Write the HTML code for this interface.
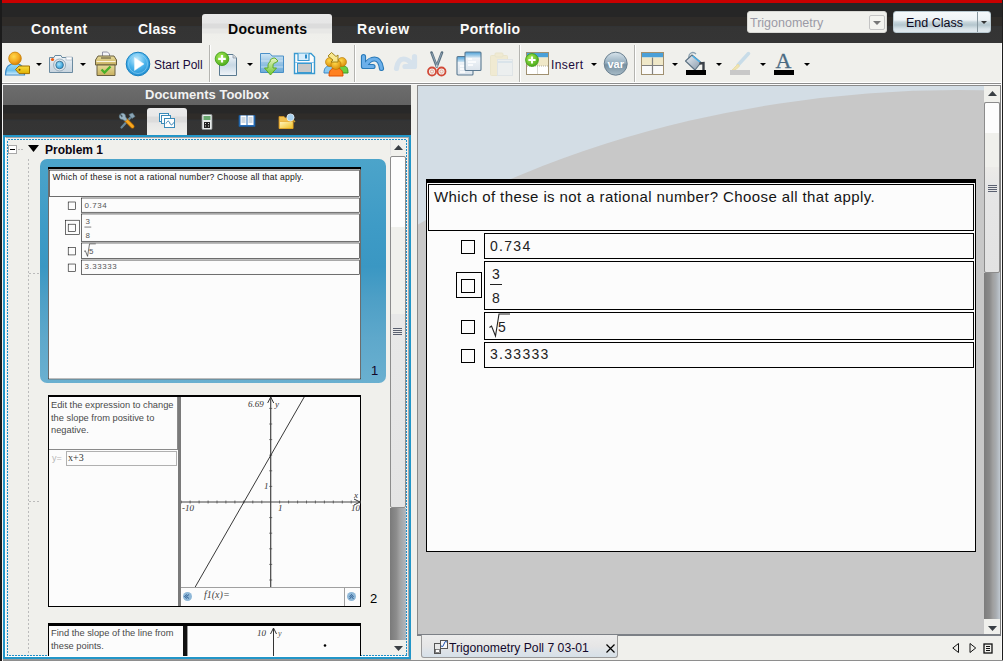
<!DOCTYPE html>
<html><head><meta charset="utf-8">
<style>
*{margin:0;padding:0;box-sizing:border-box}
html,body{width:1003px;height:661px;overflow:hidden;background:#262626;font-family:"Liberation Sans",sans-serif}
.a{position:absolute}
#red{left:2px;top:0;width:1001px;height:3px;background:#c80000}
#lbar{left:0;top:0;width:2px;height:661px;background:#1b1b1b}
#tabs{left:2px;top:17px;width:1001px;height:26px;background:linear-gradient(#2f2c29 0,#2f2c29 9px,#2e3236 9px,#343434 10px,#353535 26px)}
.tl{font-weight:bold;font-size:14px;color:#fafafa;top:21px;letter-spacing:0.55px}
#dtab{left:202px;top:14px;width:130px;height:29px;border-radius:3px 3px 0 0;background:linear-gradient(#e9e9e9 0,#e6e6e6 9px,#dcdcdc 10px,#dcdcdc 14px,#e8e8e6 15px,#e8e8e6 19px,#efefeb 20px,#f0f0ec 29px)}
#tbar{left:2px;top:43px;width:1001px;height:42px;background:#f0f0ec}
#tbar .bl{left:0;top:39px;width:1001px;height:1px;background:#fff}
#tbar .bd{left:0;top:40px;width:1001px;height:1px;background:#8c8c8c}
#tbar .bw{left:0;top:41px;width:1001px;height:1px;background:#fafafa}
.sep{top:2px;width:1px;height:37px;background:#b4b4b0}
.sep:after{content:"";position:absolute;left:1px;top:0;width:1px;height:37px;background:#fff}
.dd{width:0;height:0;border-left:3px solid transparent;border-right:3px solid transparent;border-top:3px solid #000}
.tt{font-size:12px;color:#1a0a3a;top:15px}
/* left panel */
#lp{left:3px;top:85px;width:408px;height:576px;background:#f0f0ec}
#lph{left:0;top:0;width:408px;height:20px;background:linear-gradient(#6f7276 0,#6c6c6c 1px,#636363 20px);color:#f2f2f2;font-weight:bold;font-size:13px;text-align:center;line-height:20px}
#lpt{left:0;top:20px;width:408px;height:30px;background:linear-gradient(#282828 0,#282828 8px,#2f2c29 9px,#2f2c29 14px,#2e3236 15px,#343434 16px,#353535 30px)}
#atab{left:144px;top:23px;width:40px;height:27px;border-radius:3px 3px 0 0;background:linear-gradient(#ececec 0,#e8e8e8 8px,#dcdcdc 9px,#dcdcdc 14px,#e6e6e6 15px,#f0f0ec 27px)}
#lpb{left:0;top:50px;width:408px;height:525px;background:#2296c8;border-bottom:1px solid #999}
#lpi{left:2px;top:52px;width:404px;height:520px;background:#f0f0ec;border:1px solid #fff;border-top-color:#a8a8a8;border-right-color:#a8a8a8}
#dash{left:4px;top:54px;width:400px;height:517px;border:1px dashed #2a97cc}
/* right panel */
#rp{left:417px;top:85px;width:586px;height:551px;background:#c8c8c8;border-top:1px solid #8a8a8a;border-left:1px solid #8a8a8a;overflow:hidden}
#bot{left:417px;top:636px;width:586px;height:25px;background:#f0f0ec}
.page{background:#fcfcfc;border:1px solid #000;border-top:4px solid #000}
.qb{border:1px solid #000;background:#fcfcfc}
.cb{border:1px solid #000;background:#fcfcfc}
.tx{font-size:15px;color:#111}
.pg{position:absolute;width:550px;height:373px}
.qb{border:1px solid #000;background:#fcfcfc}
.cb{width:14px;height:14px;border:1px solid #000;background:#fcfcfc}
.qt{font-size:15px;color:#151515;letter-spacing:0.4px;white-space:nowrap}
.at{font-size:14px;color:#222;letter-spacing:1.3px;white-space:nowrap}
.tht{color:#555;letter-spacing:1px}
</style></head><body>
<div class="a" id="lbar"></div>
<div class="a" id="red"></div>
<div class="a" id="tabs"></div>
<div class="a" id="dtab"></div>
<div class="a tl" style="left:31px">Content</div>
<div class="a tl" style="left:138px;letter-spacing:0.2px">Class</div>
<div class="a tl" style="left:228px;color:#050505;letter-spacing:0.35px">Documents</div>
<div class="a tl" style="left:357px;letter-spacing:0.8px">Review</div>
<div class="a tl" style="left:460px;letter-spacing:0.3px">Portfolio</div>

<!-- selector -->
<div class="a" style="left:747px;top:11px;width:140px;height:22px;border-radius:3px;background:#f0f0ec;border:1px solid #d8d8d4"></div>
<div class="a" style="left:750px;top:16px;font-size:12.5px;color:#9b9aa6">Trigonometry</div>
<div class="a" style="left:869px;top:15px;width:16px;height:15px;border:1px solid #c4c4c4;border-radius:2px;background:#f4f4f0"></div>
<div class="a dd" style="left:874px;top:21px;border-width:4px 4px 0 4px;border-top-color:#777;margin-left:-1px"></div>
<div class="a" style="left:893px;top:11px;width:98px;height:22px;border-radius:3px;border:1px solid #b8c8d0;background:linear-gradient(#f6f9fb 0,#eef3f6 8px,#c8d6dc 10px,#b4c6ce 13px,#c8d6dc 15px,#dae4ea 17px,#e2eaee 21px)"></div>
<div class="a" style="left:977px;top:12px;width:1px;height:20px;background:#8898a0"></div>
<div class="a" style="left:906px;top:16px;font-size:12.5px;color:#0c0820">End Class</div>
<div class="a dd" style="left:981px;top:21px;border-top-color:#333"></div>

<div class="a" id="tbar">
  <div class="a bl"></div><div class="a bd"></div><div class="a bw"></div>
  <div class="a sep" style="left:207px"></div>
  <div class="a sep" style="left:352px"></div>
  <div class="a sep" style="left:517px"></div>
  <div class="a sep" style="left:632px"></div>
  <div class="a tt" style="left:152px">Start Poll</div>
  <div class="a tt" style="left:549px;letter-spacing:0.4px">Insert</div>
  <div class="a dd" style="left:34px;top:20px"></div>
  <div class="a dd" style="left:78px;top:20px"></div>
  <div class="a dd" style="left:245px;top:20px"></div>
  <div class="a dd" style="left:589px;top:20px"></div>
  <div class="a dd" style="left:670px;top:20px"></div>
  <div class="a dd" style="left:714px;top:20px"></div>
  <div class="a dd" style="left:758px;top:20px"></div>
  <div class="a dd" style="left:802px;top:20px"></div>
  <!-- ICONS -->
</div>

<!-- TOOLBAR ICONS -->
<svg class="a" style="left:4px;top:50px" width="27" height="28">
<defs>
<radialGradient id="gHead" cx="0.4" cy="0.35" r="0.7"><stop offset="0" stop-color="#ffd84a"/><stop offset="0.6" stop-color="#f3a820"/><stop offset="1" stop-color="#d07a08"/></radialGradient>
<linearGradient id="gBody" x1="0" y1="0" x2="0" y2="1"><stop offset="0" stop-color="#9fdcf8"/><stop offset="0.6" stop-color="#6cc0ec"/><stop offset="1" stop-color="#d8f0fc"/></linearGradient>
<linearGradient id="gTag" x1="0" y1="0" x2="0" y2="1"><stop offset="0" stop-color="#f8dc40"/><stop offset="1" stop-color="#e0b000"/></linearGradient>
</defs>
<path d="M1.5 25C1.5 17 5 13.5 11 13.5S20.5 17 20.5 25Z" fill="url(#gBody)" stroke="#3a8ac8" stroke-width="1.2"/>
<circle cx="11" cy="8.4" r="6.3" fill="url(#gHead)" stroke="#c88000" stroke-width="0.8"/>
<path d="M11.5 19.5L15 16H25.5V23.6H15Z" fill="url(#gTag)" stroke="#a07000" stroke-width="1"/>
<circle cx="15.5" cy="19.8" r="1" fill="#805000"/>
</svg>
<svg class="a" style="left:48px;top:54px" width="26" height="20">
<defs><linearGradient id="gCam" x1="0" y1="0" x2="0" y2="1"><stop offset="0" stop-color="#f4f8fa"/><stop offset="0.5" stop-color="#d8e2ea"/><stop offset="1" stop-color="#c8d4de"/></linearGradient>
<radialGradient id="gLens" cx="0.4" cy="0.4" r="0.6"><stop offset="0" stop-color="#a8e4fc"/><stop offset="1" stop-color="#2a9ad8"/></radialGradient></defs>
<path d="M1.5 3.5H6L7 1.5H13L14 3.5H24.5V18.5H1.5Z" fill="url(#gCam)" stroke="#6a8aa0" stroke-width="1"/>
<rect x="18" y="3" width="6" height="3" fill="#fff" stroke="#9ab" stroke-width="0.6"/>
<circle cx="11.6" cy="11" r="6" fill="#dde6ec" stroke="#8aa0b0" stroke-width="0.8"/>
<circle cx="11.6" cy="11" r="3.8" fill="url(#gLens)" stroke="#3a6a88" stroke-width="0.8"/>
<circle cx="4.5" cy="5.5" r="1.6" fill="#f05a10"/>
</svg>
<svg class="a" style="left:94px;top:51px" width="24" height="26">
<defs><linearGradient id="gBox" x1="0" y1="0" x2="0" y2="1"><stop offset="0" stop-color="#e8dc9a"/><stop offset="1" stop-color="#c8b060"/></linearGradient></defs>
<path d="M8.5 1H13.5L15.5 3V8H8.5Z" fill="#f4f4f8" stroke="#7a7a90" stroke-width="0.8"/>
<path d="M4 5H20L22.5 9V14H1.5V9Z" fill="url(#gBox)" stroke="#6a6040" stroke-width="1"/>
<path d="M7 7H17" stroke="#6a6040" stroke-width="1.2"/>
<path d="M2.5 10.5H21.5" stroke="#f8f4e0" stroke-width="1"/>
<path d="M3 14H21V24.5H3Z" fill="url(#gBox)" stroke="#6a6040" stroke-width="1"/>
<path d="M7.5 18.5L10.5 21.5L16.5 15.5" fill="none" stroke="#48b028" stroke-width="2.4"/>
</svg>
<svg class="a" style="left:125px;top:51px" width="26" height="26">
<defs><radialGradient id="gPlay" cx="0.45" cy="0.3" r="0.75"><stop offset="0" stop-color="#c8ecfc"/><stop offset="0.5" stop-color="#4cb4ec"/><stop offset="1" stop-color="#1a88cc"/></radialGradient></defs>
<circle cx="13" cy="13" r="11.8" fill="url(#gPlay)" stroke="#1880c0" stroke-width="1"/>
<circle cx="13" cy="13" r="9.5" fill="none" stroke="#9ad8f8" stroke-width="0.8" opacity="0.7"/>
<path d="M9.5 6.5L19 13L9.5 19.5Z" fill="#fff" stroke="#e8f4fc" stroke-width="0.5"/>
</svg>
<svg class="a" style="left:213px;top:51px" width="26" height="26">
<defs><linearGradient id="gDoc" x1="0" y1="0" x2="0" y2="1"><stop offset="0" stop-color="#f4f8fc"/><stop offset="0.5" stop-color="#c8d8e4"/><stop offset="1" stop-color="#f0f4f8"/></linearGradient>
<radialGradient id="gPlus" cx="0.4" cy="0.35" r="0.7"><stop offset="0" stop-color="#a8ec58"/><stop offset="1" stop-color="#48a818"/></radialGradient></defs>
<path d="M6.5 3.5H20L23.5 7V24.5H6.5Z" fill="url(#gDoc)" stroke="#5a7a90" stroke-width="1"/>
<path d="M20 3.5V7H23.5" fill="#d8d8d8" stroke="#8a9aa8" stroke-width="0.8"/>
<circle cx="9" cy="7.8" r="6.8" fill="url(#gPlus)" stroke="#3a9a10" stroke-width="0.8"/>
<path d="M9 4V11.6M5.2 7.8H12.8" stroke="#fff" stroke-width="2.2"/>
</svg>
<svg class="a" style="left:259px;top:52px" width="26" height="24">
<defs><linearGradient id="gFold" x1="0" y1="0" x2="0" y2="1"><stop offset="0" stop-color="#d0e6f4"/><stop offset="0.5" stop-color="#98c4e4"/><stop offset="1" stop-color="#6aaad8"/></linearGradient>
<linearGradient id="gArr" x1="0" y1="0" x2="0" y2="1"><stop offset="0" stop-color="#e8f4c8"/><stop offset="1" stop-color="#70c830"/></linearGradient></defs>
<path d="M1.5 1.5H11L13 4H24.5V20.5H1.5Z" fill="url(#gFold)" stroke="#4a90c8" stroke-width="1"/>
<path d="M2 9H24M2 15H24" stroke="#e8f4fc" stroke-width="0.8" opacity="0.8"/>
<path d="M11 10C11 7 13 6 16 6L19 9L16 11C14.5 11 14 12 14 14V16H17.5L11.5 23L5.5 16H9V14C9 12 10 10 11 10Z" fill="url(#gArr)" stroke="#58a818" stroke-width="0.9"/>
</svg>
<svg class="a" style="left:293px;top:52px" width="23" height="23">
<path d="M1.5 1.5H18L21.5 5V21.5H1.5Z" fill="#fcfcfc" stroke="#3a9ad0" stroke-width="1.4"/>
<path d="M5 1.5V8.5H16V1.5" fill="#d8eefc" stroke="#3a9ad0" stroke-width="1.2"/>
<rect x="12" y="2.5" width="2" height="4" fill="#2a8ac8"/>
<rect x="4.5" y="11.5" width="14" height="9" fill="#c8c8c8" stroke="#3a9ad0" stroke-width="1"/>
<path d="M2 10.5H21" stroke="#8ac4ec" stroke-width="1"/>
</svg>
<svg class="a" style="left:323px;top:51px" width="26" height="26">
<defs><radialGradient id="gH2" cx="0.4" cy="0.35" r="0.7"><stop offset="0" stop-color="#ffd84a"/><stop offset="1" stop-color="#d88a08"/></radialGradient></defs>
<path d="M1 22C1 17 3 15 7 15S12 17 12 22Z" fill="#8ccaf0" stroke="#3a88c8"/>
<path d="M14 22C14 17 16 15 20 15S25 17 25 22Z" fill="#6cd040" stroke="#3a9a20"/>
<circle cx="7" cy="11" r="4.5" fill="url(#gH2)" stroke="#b87a00" stroke-width="0.6"/>
<circle cx="19" cy="11" r="4.5" fill="url(#gH2)" stroke="#b87a00" stroke-width="0.6"/>
<path d="M6 25C6 19 8.5 17 13 17S20 19 20 25Z" fill="#ff8020" stroke="#e05000"/>
<circle cx="13" cy="13.5" r="5" fill="url(#gH2)" stroke="#b87a00" stroke-width="0.6"/>
<path d="M5 5L8.5 1.5L13 5.5L15 4V11H8L10 9Z" fill="#f8e890" stroke="#9a7a10" stroke-width="0.9"/>
</svg>
<svg class="a" style="left:360px;top:53px" width="26" height="20">
<path d="M6 11.5C9 7 12 6 14.5 6C18 6 20.5 9 21.5 15.5" fill="none" stroke="#2a7ab8" stroke-width="5.2" stroke-linecap="round"/>
<path d="M3.5 3.5V13.5H13" fill="none" stroke="#2a7ab8" stroke-width="5.2" stroke-linecap="round" stroke-linejoin="round"/>
<path d="M6 11.5C9 7 12 6 14.5 6C18 6 20.5 9 21.5 15.5" fill="none" stroke="#6cb0ea" stroke-width="3" stroke-linecap="round"/>
<path d="M3.5 3.5V13.5H13" fill="none" stroke="#6cb0ea" stroke-width="3" stroke-linecap="round" stroke-linejoin="round"/>
<path d="M5 12L11 6" stroke="#6cb0ea" stroke-width="3"/>
</svg>
<svg class="a" style="left:392px;top:53px" width="26" height="20">
<path d="M20 11.5C17 7 14 6 11.5 6C8 6 5.5 9 4.5 15.5" fill="none" stroke="#d6e2ec" stroke-width="5.2" stroke-linecap="round"/>
<path d="M22.5 3.5V13.5H13" fill="none" stroke="#d6e2ec" stroke-width="5.2" stroke-linecap="round" stroke-linejoin="round"/>
</svg>
<svg class="a" style="left:426px;top:51px" width="22" height="26">
<path d="M5.5 1.5L10.8 15.5M16 1.5L10.7 15.5" stroke="#5a7080" stroke-width="2.6" stroke-linecap="round"/>
<path d="M6 2.5L10.5 14M15.5 2.5L11 14" stroke="#9ab0c0" stroke-width="0.8" stroke-linecap="round"/>
<circle cx="10.75" cy="15" r="1" fill="#c8d4dc"/>
<circle cx="6" cy="20.5" r="4" fill="none" stroke="#d24a38" stroke-width="1.8"/>
<circle cx="15.5" cy="20.5" r="4" fill="none" stroke="#d24a38" stroke-width="1.8"/>
<circle cx="6" cy="20.5" r="1.6" fill="none" stroke="#e8a090" stroke-width="0.9"/>
<circle cx="15.5" cy="20.5" r="1.6" fill="none" stroke="#e8a090" stroke-width="0.9"/>
</svg>
<svg class="a" style="left:456px;top:51px" width="26" height="25">
<defs><linearGradient id="gPg" x1="0" y1="0" x2="0" y2="1"><stop offset="0" stop-color="#4aa0d8"/><stop offset="0.28" stop-color="#c8e0f0"/><stop offset="0.32" stop-color="#f0f4f8"/><stop offset="1" stop-color="#dce4ec"/></linearGradient></defs>
<rect x="1" y="5.5" width="16" height="18.5" rx="1" fill="url(#gPg)" stroke="#5a7890" stroke-width="1.1"/>
<path d="M4 15H9M4 18H10M4 21H9" stroke="#fff" stroke-width="1.4"/>
<rect x="9" y="1" width="16" height="18.5" rx="1" fill="url(#gPg)" stroke="#5a7890" stroke-width="1.1"/>
<path d="M12 8H16M12 11H20M12 14H17" stroke="#fff" stroke-width="1.4"/>
</svg>
<svg class="a" style="left:489px;top:52px" width="25" height="25" opacity="0.42">
<rect x="1.5" y="3.5" width="17" height="20" rx="1" fill="#f0e4b0" stroke="#e0d4a0"/>
<rect x="6" y="1" width="8" height="4" rx="1" fill="#f0e4b0" stroke="#e0d4a0"/>
<rect x="8.5" y="7.5" width="15" height="16" fill="#e8eef4" stroke="#c8d4e0"/>
<path d="M9 10H23" stroke="#bcd4e8" stroke-width="2"/>
</svg>
<svg class="a" style="left:525px;top:51px" width="25" height="25">
<defs><radialGradient id="gPl2" cx="0.4" cy="0.35" r="0.7"><stop offset="0" stop-color="#a8ec58"/><stop offset="1" stop-color="#48a818"/></radialGradient></defs>
<rect x="1.5" y="1.5" width="22" height="22" fill="#fff" stroke="#a09070" stroke-width="1"/>
<rect x="2" y="2" width="21" height="4.5" fill="#4aa0d8"/>
<rect x="2" y="6.5" width="21" height="8.5" fill="#f0e8c8"/>
<path d="M2 15H23M12.5 6.5V23" stroke="#a0a090" stroke-width="0.8" stroke-dasharray="1 1"/>
<circle cx="7" cy="9" r="6.4" fill="url(#gPl2)" stroke="#3a9a10" stroke-width="0.8"/>
<path d="M7 5.4V12.6M3.4 9H10.6" stroke="#fff" stroke-width="2"/>
</svg>
<svg class="a" style="left:603px;top:51px" width="26" height="26">
<defs><linearGradient id="gVar" x1="0" y1="0" x2="0" y2="1"><stop offset="0" stop-color="#d8e4ec"/><stop offset="0.45" stop-color="#98b0c0"/><stop offset="0.55" stop-color="#7890a0"/><stop offset="1" stop-color="#a8bcc8"/></linearGradient></defs>
<circle cx="12.7" cy="12.7" r="11.5" fill="url(#gVar)" stroke="#6a8090" stroke-width="1"/>
<text x="12.7" y="16.5" text-anchor="middle" font-family="Liberation Sans" font-weight="bold" font-size="11" fill="#fff">var</text>
</svg>
<svg class="a" style="left:640px;top:51px" width="25" height="25">
<rect x="1.5" y="1.5" width="22" height="22" fill="#fafafa" stroke="#a09070" stroke-width="1"/>
<rect x="2" y="2" width="21" height="4.5" fill="#4aa0d8"/>
<rect x="2" y="6.5" width="21" height="8" fill="#f0e8c8"/>
<path d="M2 14.5H23M12.5 6.5V23" stroke="#808080" stroke-width="1.2"/>
</svg>
<svg class="a" style="left:684px;top:51px" width="24" height="25">
<defs><linearGradient id="gBk" x1="0" y1="0" x2="1" y2="1"><stop offset="0" stop-color="#eef2f6"/><stop offset="0.5" stop-color="#b8c4d0"/><stop offset="1" stop-color="#8898a8"/></linearGradient></defs>
<path d="M5 7C4 2 9 0 12 3" fill="none" stroke="#8aa0b0" stroke-width="1.3"/>
<path d="M1.5 10L8 4L17 11.5L11 19Z" fill="url(#gBk)" stroke="#5a7080" stroke-width="1.1" stroke-linejoin="round"/>
<path d="M8.5 5L16 11" stroke="#4ab0e8" stroke-width="1.6"/>
<path d="M15.5 12.5L19.5 12V19" stroke="#3a4048" stroke-width="2.4" fill="none"/>
<rect x="2" y="19" width="20" height="5" fill="#000"/>
</svg>
<svg class="a" style="left:729px;top:51px" width="22" height="25">
<path d="M19.5 2.5L9 14" stroke="#c8dce8" stroke-width="3.5" stroke-linecap="round"/>
<path d="M9 13L4.5 17.5L3 19L7 18.5L10.5 15Z" fill="#f0e4b0" stroke="#e8dca8"/>
<rect x="1" y="19" width="20" height="5" fill="#c8c8c8"/>
</svg>
<svg class="a" style="left:773px;top:51px" width="22" height="25">
<text x="10.5" y="17" text-anchor="middle" font-family="Liberation Serif" font-size="22" fill="#4a6a82" stroke="#4a6a82" stroke-width="0.3">A</text>
<rect x="1" y="19" width="20" height="5" fill="#000"/>
</svg>
<!-- LEFT PANEL -->
<div class="a" style="left:3px;top:85px;width:1000px;height:576px;background:#f0f0ec"></div>
<div class="a" id="lp">
  <div class="a" id="lph">Documents Toolbox</div>
  <div class="a" id="lpt"></div>
  <div class="a" id="atab"></div>
  <div class="a" id="lpb"></div>
  <div class="a" id="lpi"></div>
  
</div>


<!-- left panel tab icons -->
<svg class="a" style="left:118px;top:112px" width="18" height="18">
<path d="M13 5L3.5 15.5" stroke="#6a8a9c" stroke-width="2.2" stroke-linecap="round"/>
<path d="M11 2.5L14.5 1L17 4.5L14 6.5Z" fill="#8aa4b4" stroke="#5a7a8c" stroke-width="0.6"/>
<path d="M8 8L14.5 14.5" stroke="#b86a00" stroke-width="4" stroke-linecap="round"/>
<path d="M8 8L14.5 14.5" stroke="#f8a820" stroke-width="2.6" stroke-linecap="round"/>
<path d="M2 2.5C0.5 4.5 1.5 7.5 4.5 7.5L7.5 9L9 7.5L7.5 4.5C7.5 1.5 4.5 0.5 2.5 2L4.5 4L3.8 5.2Z" fill="#9ab4c4" stroke="#5a7a8c" stroke-width="0.6"/>
</svg>
<svg class="a" style="left:159px;top:113px" width="17" height="16">
<rect x="0.5" y="0.5" width="9" height="8" fill="#fcfdfd" stroke="#3a8ab8" stroke-width="1"/>
<rect x="2.5" y="2.5" width="9" height="8" fill="#fcfdfd" stroke="#3a8ab8" stroke-width="1"/>
<rect x="5.5" y="5.5" width="10" height="9" fill="#fcfdfd" stroke="#3a8ab8" stroke-width="1"/>
<path d="M7 10.5C8.5 7.5 10 7.5 10.8 10S13.5 12.5 14.5 9.5" stroke="#2a7ab0" stroke-width="1" fill="none"/>
</svg>
<svg class="a" style="left:201px;top:114px" width="12" height="16">
<rect x="1" y="0.5" width="10" height="15" rx="1" fill="#e8ecec" stroke="#8a9090" stroke-width="0.8"/>
<rect x="2.5" y="2" width="7" height="4" fill="#6aa870"/>
<rect x="3" y="8" width="6" height="6" fill="#222"/>
<path d="M4 9.5H5M7 9.5H8M4 12H5M7 12H8" stroke="#ddd" stroke-width="1"/>
</svg>
<svg class="a" style="left:238px;top:114px" width="18" height="15">
<path d="M1 1.5H8.5L9 2.5L9.5 1.5H17V12.5H1Z" fill="#2a6eb8" stroke="#1a5a9a" stroke-width="0.8"/>
<rect x="2.5" y="1.5" width="6" height="9.5" fill="#fff"/>
<rect x="9.5" y="1.5" width="6" height="9.5" fill="#fff"/>
<path d="M3.5 4H7.5M3.5 6H7.5M3.5 8H7.5M10.5 4H14.5M10.5 6H14.5M10.5 8H14.5" stroke="#9ab" stroke-width="0.9"/>
</svg>
<svg class="a" style="left:278px;top:113px" width="18" height="17">
<defs><linearGradient id="gYf" x1="0" y1="0" x2="1" y2="1"><stop offset="0" stop-color="#fff4c0"/><stop offset="1" stop-color="#f0c020"/></linearGradient></defs>
<path d="M1 3.5H6L7.5 5H15V15.5H1Z" fill="#f0c050" stroke="#d09020" stroke-width="0.8"/>
<path d="M1.5 8.5H15V15.5H1.5Z" fill="url(#gYf)" stroke="#e0a020" stroke-width="0.6"/>
<circle cx="12.5" cy="4.5" r="3.6" fill="#a8d0ec" stroke="#e8f4fc" stroke-width="0.8"/>
<path d="M15 7L17 9" stroke="#d0a030" stroke-width="1.4"/>
</svg>

<div class="a" style="left:2px;top:85px;width:1px;height:576px;background:#f4f4f4"></div>
<svg class="a" style="left:7px;top:139px" width="400" height="517"><rect x="0.5" y="0.5" width="399" height="516" fill="none" stroke="#1f8fc8" stroke-width="1" stroke-dasharray="2 1" shape-rendering="crispEdges"/></svg>
<div class="a" style="left:8px;top:145px;width:9px;height:9px;border:1px solid #a8a8a8;background:#fff"></div>
<div class="a" style="left:10px;top:149px;width:5px;height:1px;background:#000"></div>
<svg class="a" style="left:18px;top:149px" width="6" height="1"><path d="M0 .5H5" stroke="#bbb" stroke-dasharray="2 1"/></svg>
<svg class="a" style="left:28px;top:159px" width="1" height="496"><path d="M.5 0V496" stroke="#bbb" stroke-dasharray="2 2"/></svg>
<svg class="a" style="left:28px;top:145px" width="11" height="7"><path d="M0 0H11L5.5 7Z" fill="#000"/></svg>
<div class="a" style="left:45px;top:143px;font-size:12px;font-weight:bold;color:#0a0510">Problem 1</div>
<!-- thumb 1 -->
<div class="a" style="left:40px;top:159px;width:346px;height:224px;border-radius:7px;background:linear-gradient(#4ca4ca 0%,#3e9bc6 30%,#3a97c3 48%,#4d9fc6 62%,#5ea8cb 80%,#6ab0d0 100%)"></div>
<div class="a" style="left:48px;top:167px;width:550px;height:373px;transform:scale(0.5691);transform-origin:0 0">
<div class="pg">
  <div class="a" style="left:0;top:0;width:550px;height:373px;background:#fcfcfc;border:1px solid #000;border-top:4px solid #000"></div>
  <div class="a qb" style="left:2px;top:5px;width:546px;height:47px"></div>
  <div class="a qt" style="left:8px;top:9px">Which of these is not a rational number? Choose all that apply.</div>
  <div class="a qb" style="left:58px;top:54px;width:490px;height:26px"></div>
  <div class="a qb" style="left:58px;top:82px;width:490px;height:49px"></div>
  <div class="a qb" style="left:58px;top:133px;width:490px;height:28px"></div>
  <div class="a qb" style="left:58px;top:163px;width:490px;height:26px"></div>
  <div class="a cb" style="left:35px;top:61px"></div>
  <div class="a" style="left:30px;top:93px;width:26px;height:26px;border:1px solid #000"></div>
  <div class="a cb" style="left:35px;top:100px"></div>
  <div class="a cb" style="left:35px;top:141px"></div>
  <div class="a cb" style="left:35px;top:170px"></div>
  <div class="a at tht" style="left:64px;top:59px">0.734</div>
  <div class="a at tht" style="left:66px;top:87px">3</div>
  <div class="a" style="left:64px;top:105px;width:12px;height:1px;background:#222"></div>
  <div class="a at tht" style="left:66px;top:111px">8</div>
  <svg class="a" style="left:62px;top:134px" width="24" height="25"><path d="M1.5 14.5 L3.5 13 L7.5 23 L11 1 L22 1" fill="none" stroke="#222" stroke-width="1.1"/></svg>
  <div class="a at tht" style="left:72px;top:140px">5</div>
  <div class="a at tht" style="left:64px;top:167px">3.33333</div>
</div></div>
<div class="a" style="left:371px;top:363px;font-size:13px;color:#12082a">1</div>
<svg class="a" style="left:29px;top:273px" width="11" height="1"><path d="M0 .5H11" stroke="#bbb" stroke-dasharray="2 2"/></svg>
<svg class="a" style="left:29px;top:501px" width="12" height="1"><path d="M0 .5H12" stroke="#bbb" stroke-dasharray="2 2"/></svg>
<!-- thumb 2 -->
<div class="a" style="left:48px;top:395px;width:313px;height:212px;background:#fcfcfc;border:1px solid #000;border-top:2px solid #000"></div>
<div class="a" style="left:49px;top:397px;width:129px;height:53px;border:1px solid #8a8a8a;border-top:none;border-left:none"></div>
<div class="a" style="left:51px;top:399px;font-size:9.3px;line-height:12.6px;color:#4a4a4a;width:126px">Edit the expression to change the slope from positive to negative.</div>
<div class="a" style="left:52px;top:453px;font-size:9px;color:#b8b8b8">y=</div>
<div class="a" style="left:66px;top:451px;width:111px;height:15px;border:1px solid #b0b0b0;background:#fcfcfc"></div>
<div class="a" style="left:68px;top:452px;font-size:10px;font-family:'Liberation Serif';color:#333">x+3</div>
<div class="a" style="left:178px;top:397px;width:3px;height:209px;background:#7a7a7a"></div>
<svg class="a" style="left:181px;top:397px" width="180" height="190">
<path d="M0.2 103.5v3 M9.1 103.5v3 M18.1 103.5v3 M27.1 103.5v3 M36.0 103.5v3 M44.9 103.5v3 M53.9 103.5v3 M62.8 103.5v3 M71.8 103.5v3 M80.8 103.5v3 M98.6 103.5v3 M107.6 103.5v3 M116.6 103.5v3 M125.5 103.5v3 M134.4 103.5v3 M143.4 103.5v3 M152.3 103.5v3 M161.3 103.5v3 M170.2 103.5v3 M179.2 103.5v3 M88.2 183.0h3 M88.2 167.4h3 M88.2 151.8h3 M88.2 136.2h3 M88.2 120.6h3 M88.2 89.4h3 M88.2 73.8h3 M88.2 58.2h3 M88.2 42.6h3 M88.2 27.0h3 M88.2 11.4h3" stroke="#555" stroke-width="0.8" fill="none"/>
<path d="M89.7 0V190 M0 105H179" stroke="#444" stroke-width="1.2" fill="none"/>
<path d="M86.7 6L89.7 0L92.7 6 M173 102L179 105L173 108" stroke="#333" stroke-width="1" fill="none"/>
<path d="M14.2 190L123.2 0" stroke="#222" stroke-width="0.9" fill="none"/>
<text x="67" y="10" font-size="9" font-style="italic" fill="#333" font-family="Liberation Serif">6.69</text>
<text x="94" y="10" font-size="9" font-style="italic" fill="#333" font-family="Liberation Serif">y</text>
<text x="83" y="92" font-size="9" font-style="italic" fill="#333" font-family="Liberation Serif">1</text>
<text x="173" y="101" font-size="9" font-style="italic" fill="#333" font-family="Liberation Serif">x</text>
<text x="1" y="114" font-size="9" font-style="italic" fill="#333" font-family="Liberation Serif">-10</text>
<text x="97" y="114" font-size="9" font-style="italic" fill="#333" font-family="Liberation Serif">1</text>
<text x="170" y="114" font-size="9" font-style="italic" fill="#333" font-family="Liberation Serif">10</text>
</svg>
<div class="a" style="left:181px;top:587px;width:179px;height:19px;border-top:1px solid #a0a0a0;background:#fcfcfc"></div>
<div class="a" style="left:344px;top:588px;width:1px;height:18px;background:#a0a0a0"></div>
<svg class="a" style="left:182px;top:591px" width="12" height="12"><circle cx="5.5" cy="5.5" r="4.5" fill="#8fb8d8"/><path d="M7 3.5L4.5 5.5L7 7.5 M5 3.5L2.5 5.5L5 7.5" stroke="#2a5a90" fill="none" stroke-width="0.9"/></svg>
<svg class="a" style="left:346px;top:591px" width="12" height="12"><circle cx="5.5" cy="5.5" r="4.5" fill="#8fb8d8"/><path d="M3.5 6L5.5 3.5L7.5 6 M3.5 8L5.5 5.5L7.5 8" stroke="#2a5a90" fill="none" stroke-width="0.9"/></svg>
<div class="a" style="left:204px;top:589px;font-size:10px;font-style:italic;font-family:'Liberation Serif';color:#444">f1(x)=</div>
<div class="a" style="left:370px;top:591px;font-size:13px;color:#000">2</div>
<!-- thumb 3 -->
<div class="a" style="left:48px;top:623px;width:313px;height:33px;background:#fcfcfc;border:1px solid #000;border-top:3px solid #000;border-bottom:none"></div>
<div class="a" style="left:183px;top:626px;width:4px;height:30px;background:#111"></div>
<div class="a" style="left:187px;top:626px;width:1px;height:30px;background:#999"></div>
<div class="a" style="left:51px;top:627px;font-size:9.3px;line-height:12.6px;color:#4a4a4a;width:130px">Find the slope of the line from these points.</div>
<svg class="a" style="left:188px;top:626px" width="172" height="30"><path d="M85.5 2V32 M82.5 8L85.5 2L88.5 8" stroke="#333" stroke-width="1" fill="none"/><circle cx="137" cy="19.5" r="1.3" fill="#000"/>
<text x="69" y="10" font-size="9" font-style="italic" fill="#333" font-family="Liberation Serif">10</text><text x="90" y="10" font-size="8" font-style="italic" fill="#555" font-family="Liberation Serif">y</text></svg>
<!-- left scrollbar -->
<div class="a" style="left:390px;top:140px;width:16px;height:15px;background:#f0f0ec;border-left:1px solid #e4e4e4"></div>
<svg class="a" style="left:394px;top:145px" width="9" height="5"><path d="M0 5L4.5 0L9 5Z" fill="#3a3f44"/></svg>
<div class="a" style="left:390px;top:156px;width:16px;height:352px;border:1px solid #8c8c8c;border-radius:2px;background:linear-gradient(#fdfdfd 0,#fdfdfd 20%,#f0f0ec 20%,#f0f0ec 45%,#e8e8e8 45%,#e4e4e4 100%)"></div>
<svg class="a" style="left:393px;top:328px" width="9" height="8"><path d="M0 .5H9M0 2.5H9M0 4.5H9M0 6.5H9" stroke="#5a6070" stroke-width="1"/></svg>
<div class="a" style="left:390px;top:508px;width:16px;height:132px;background:linear-gradient(90deg,#7a7a7a 0,#8c8c8c 40%,#a0a0a0 60%,#b0b8c0 100%)"></div>
<div class="a" style="left:390px;top:640px;width:16px;height:15px;background:#f0f0ec"></div>
<svg class="a" style="left:394px;top:646px" width="9" height="5"><path d="M0 0L4.5 5L9 0Z" fill="#3a3f44"/></svg>

<!-- RIGHT PANEL -->
<div class="a" id="rp">
  <svg class="a" style="left:0;top:0" width="586" height="551"><rect x="0" y="0" width="586" height="551" fill="#d3dde5"/><ellipse cx="540" cy="715" rx="923" ry="711" fill="#c8c8c8"/></svg>
</div>
<div class="a" id="bot"></div>
<div class="a" style="left:426px;top:179px;width:550px;height:373px">
<div class="pg">
  <div class="a" style="left:0;top:0;width:550px;height:373px;background:#fcfcfc;border:1px solid #000;border-top:4px solid #000"></div>
  <div class="a qb" style="left:2px;top:5px;width:546px;height:47px"></div>
  <div class="a qt" style="left:8px;top:9px">Which of these is not a rational number? Choose all that apply.</div>
  <div class="a qb" style="left:58px;top:54px;width:490px;height:26px"></div>
  <div class="a qb" style="left:58px;top:82px;width:490px;height:49px"></div>
  <div class="a qb" style="left:58px;top:133px;width:490px;height:28px"></div>
  <div class="a qb" style="left:58px;top:163px;width:490px;height:26px"></div>
  <div class="a cb" style="left:35px;top:61px"></div>
  <div class="a" style="left:30px;top:93px;width:26px;height:26px;border:1px solid #000"></div>
  <div class="a cb" style="left:35px;top:100px"></div>
  <div class="a cb" style="left:35px;top:141px"></div>
  <div class="a cb" style="left:35px;top:170px"></div>
  <div class="a at" style="left:64px;top:59px">0.734</div>
  <div class="a at" style="left:66px;top:87px">3</div>
  <div class="a" style="left:64px;top:105px;width:12px;height:1px;background:#222"></div>
  <div class="a at" style="left:66px;top:111px">8</div>
  <svg class="a" style="left:62px;top:134px" width="24" height="25"><path d="M1.5 14.5 L3.5 13 L7.5 23 L11 1 L22 1" fill="none" stroke="#222" stroke-width="1.1"/></svg>
  <div class="a at" style="left:72px;top:140px">5</div>
  <div class="a at" style="left:64px;top:167px">3.33333</div>
</div></div>


<!-- right scrollbar -->
<div class="a" style="left:1000px;top:85px;width:1px;height:551px;background:#808080"></div>
<div class="a" style="left:1001px;top:43px;width:1px;height:618px;background:#fafafa"></div>
<div class="a" style="left:1002px;top:0;width:1px;height:661px;background:#1e1e1e"></div>
<div class="a" style="left:984px;top:86px;width:16px;height:16px;background:#f0f0ec"></div>
<svg class="a" style="left:988px;top:91px" width="9" height="5"><path d="M0 5L4.5 0L9 5Z" fill="#3a3f44"/></svg>
<div class="a" style="left:984px;top:102px;width:16px;height:171px;border:1px solid #8c8c8c;border-radius:2px;background:linear-gradient(#fdfdfd 0,#fdfdfd 18%,#f0f0ec 18%,#f0f0ec 38%,#ecebe8 38%,#e6e6e6 50%,#e2e2e2 100%)"></div>
<svg class="a" style="left:988px;top:185px" width="9" height="8"><path d="M0 .5H9M0 2.5H9M0 4.5H9M0 6.5H9" stroke="#5a6070" stroke-width="1"/></svg>
<div class="a" style="left:984px;top:273px;width:16px;height:346px;background:linear-gradient(90deg,#7c7c7c 0,#8a8a8a 35%,#a0a0a0 55%,#a8acb0 75%,#c0c8d0 100%)"></div>
<div class="a" style="left:984px;top:619px;width:16px;height:16px;background:#f0f0ec"></div>
<svg class="a" style="left:988px;top:626px" width="9" height="5"><path d="M0 0L4.5 5L9 0Z" fill="#3a3f44"/></svg>
<!-- bottom strip -->
<div class="a" style="left:417px;top:634px;width:584px;height:2px;background:#7c8086"></div>
<div class="a" style="left:3px;top:660px;width:1000px;height:1px;background:#8e8e8e"></div>
<div class="a" style="left:421px;top:635px;width:197px;height:23px;border:1px solid #9a9a9a;border-top:none;border-radius:0 0 3px 3px;background:linear-gradient(#ececec 0,#e6e6e6 50%,#dfe4e8 70%,#d6e0e8 100%)"></div>
<svg class="a" style="left:434px;top:640px" width="15" height="14">
<rect x="0.5" y="3.5" width="6" height="10" fill="#e8e8e8" stroke="#555"/><rect x="1.5" y="9.5" width="4" height="3" fill="#fff" stroke="#555" stroke-width="0.7"/>
<rect x="6.5" y="0.5" width="7" height="8" fill="#f8f8f8" stroke="#555"/><path d="M7 6Q9 8 10 4T13 2" stroke="#1a50b0" fill="none" stroke-width="1"/></svg>
<div class="a" style="left:449px;top:641px;font-size:12.2px;color:#12082a">Trigonometry Poll 7 03-01</div>
<svg class="a" style="left:606px;top:644px" width="9" height="9"><path d="M.5 .5L8.5 8.5M8.5 .5L.5 8.5" stroke="#000" stroke-width="1.2"/></svg>
<svg class="a" style="left:952px;top:643px" width="8" height="11"><path d="M6.5 .5V9.5L.8 5Z" fill="none" stroke="#111" stroke-width="1"/></svg>
<svg class="a" style="left:969px;top:643px" width="8" height="11"><path d="M1 .5V9.5L6.7 5Z" fill="none" stroke="#111" stroke-width="1"/></svg>
<svg class="a" style="left:983px;top:643px" width="10" height="11"><rect x="1" y="1" width="8" height="9" fill="none" stroke="#111" stroke-width="1.3"/><path d="M3 3.5H7M3 5.5H7M3 7.5H7" stroke="#111" stroke-width="1"/></svg>
</body></html>
